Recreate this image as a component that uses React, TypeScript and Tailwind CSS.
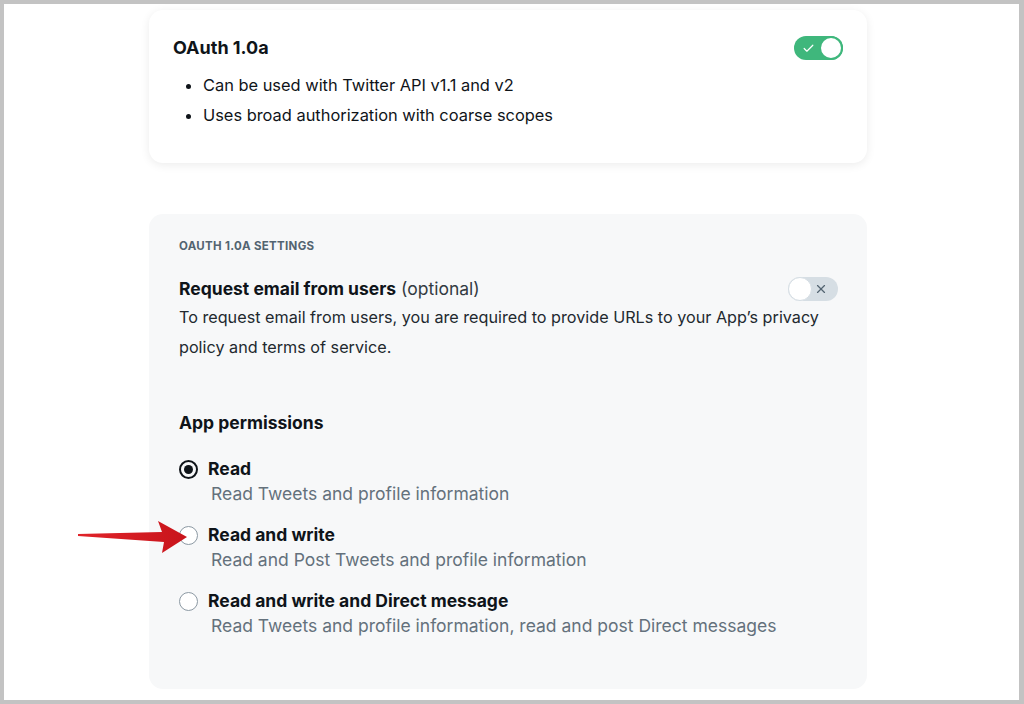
import { Check, X } from "lucide-react";

const permissions = [
  { label: "Read", desc: "Read Tweets and profile information", checked: true },
  { label: "Read and write", desc: "Read and Post Tweets and profile information", checked: false },
  {
    label: "Read and write and Direct message",
    desc: "Read Tweets and profile information, read and post Direct messages",
    checked: false,
  },
];

function Toggle({ on }: { on: boolean }) {
  if (on) {
    return (
      <div className="relative w-[49px] h-[24px] rounded-full bg-[#3fb77c] flex items-center">
        <Check className="ml-[8px] w-[13px] h-[13px] text-white" strokeWidth={2.2} />
        <div className="absolute right-0 top-0 w-[24px] h-[24px] rounded-full bg-white border-2 border-[#3fb77c]" />
      </div>
    );
  }
  return (
    <div className="relative w-[50px] h-[24px] rounded-full bg-[#d6dee4] flex items-center justify-end">
      <X className="mr-[10px] w-[14px] h-[14px] text-[#536471]" strokeWidth={2} />
      <div className="absolute left-0 top-0 w-[24px] h-[24px] rounded-full bg-white border border-[#d6dee4]" />
    </div>
  );
}

function Radio({ checked }: { checked: boolean }) {
  return checked ? (
    <div className="w-[19px] h-[19px] rounded-full border-2 border-[#0f1419] flex items-center justify-center shrink-0">
      <div className="w-[9px] h-[9px] rounded-full bg-[#0f1419]" />
    </div>
  ) : (
    <div className="w-[19px] h-[19px] rounded-full border border-[#8c99a3] bg-white shrink-0" />
  );
}

export default function App() {
  return (
    <div
      className="relative w-[1024px] h-[704px] bg-white border-4 border-r-[5px] border-[#c3c3c3] overflow-hidden text-[#0f1419]"
      style={{ fontFamily: "Inter, 'Noto Sans', sans-serif" }}
    >
      {/* OAuth card */}
      <div className="ml-[145px] mt-[6px] w-[718px] h-[153px] bg-white rounded-[14px] shadow-[0_2px_10px_rgba(0,0,0,0.08)] pl-[24px] pr-[24px] pt-[26px]">
        <div className="flex items-center justify-between">
          <div className="text-[18px] font-bold leading-[24px]">OAuth 1.0a</div>
          <Toggle on />
        </div>
        <ul className="mt-[10px] text-[16.4px] leading-[30px] list-disc pl-[30px]">
          <li>Can be used with Twitter API v1.1 and v2</li>
          <li>Uses broad authorization with coarse scopes</li>
        </ul>
      </div>

      {/* Settings card */}
      <div className="ml-[145px] mt-[51px] w-[718px] h-[475px] bg-[#f7f8f9] rounded-[14px] pl-[30px] pr-[29px] pt-[25px]">
        <div className="text-[11.5px] font-bold tracking-[0.3px] text-[#536471] leading-[14px]">
          OAUTH 1.0A SETTINGS
        </div>
        <div className="mt-[24px] flex items-center justify-between">
          <div className="text-[17.5px] leading-[24px]">
            <span className="font-bold">Request email from users</span>{" "}
            <span className="text-[#333b42]">(optional)</span>
          </div>
          <Toggle on={false} />
        </div>
        <p className="mt-[1px] text-[16.2px] leading-[30px] text-[#22292f] pr-[5px]">
          To request email from users, you are required to provide URLs to your App’s privacy policy and terms of service.
        </p>
        <div className="mt-[49px] text-[17.5px] font-bold leading-[24px]">App permissions</div>
        <div className="mt-[22px] flex flex-col gap-[17px]">
          {permissions.map((p) => (
            <div key={p.label}>
              <div className="flex items-center gap-[10px]">
                <Radio checked={p.checked} />
                <div className="text-[17.5px] font-bold leading-[24px]">{p.label}</div>
              </div>
              <div className="pl-[32px] text-[17.5px] leading-[24px] text-[#64717c] mt-[1px]">{p.desc}</div>
            </div>
          ))}
        </div>
      </div>

      {/* red arrow annotation */}
      <svg className="absolute left-[66px] top-[510px]" width="130" height="45" viewBox="66 510 130 45">
        <defs>
          <linearGradient id="ar" x1="0" y1="0" x2="1" y2="0">
            <stop offset="0" stopColor="#e0242a" />
            <stop offset="1" stopColor="#c8141b" />
          </linearGradient>
        </defs>
        <path
          d="M74 530 L158 528 L154 517 L183 533 L158 549 L160 538 L74 532 Z"
          fill="url(#ar)"
        />
      </svg>
    </div>
  );
}
